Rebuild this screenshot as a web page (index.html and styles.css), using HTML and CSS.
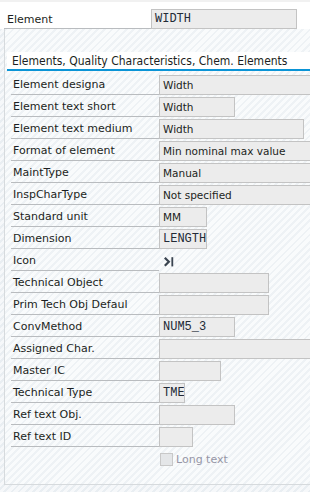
FILE: index.html
```html
<!doctype html>
<html lang="en">
<head>
    <meta charset="UTF-8">
    <title>Element</title>
    <link rel="stylesheet" href="styles.css">
</head>
<body>
<div class="top">
    <div class="row head">
        <span class="lbl">Element</span>
        <span class="fld mono w146">WIDTH</span>
    </div>
</div>
<div class="frame">
    <div class="tab">Elements, Quality Characteristics, Chem. Elements</div>
    <div class="rows">
        <div class="row"><span class="lbl">Element designa</span><span class="fld wide">Width</span></div>
        <div class="row"><span class="lbl">Element text short</span><span class="fld w76">Width</span></div>
        <div class="row"><span class="lbl">Element text medium</span><span class="fld w145">Width</span></div>
        <div class="row"><span class="lbl">Format of element</span><span class="fld wide">Min nominal max value</span></div>
        <div class="row"><span class="lbl">MaintType</span><span class="fld wide">Manual</span></div>
        <div class="row"><span class="lbl">InspCharType</span><span class="fld wide">Not specified</span></div>
        <div class="row"><span class="lbl">Standard unit</span><span class="fld w48">MM</span></div>
        <div class="row"><span class="lbl">Dimension</span><span class="fld mono w48">LENGTH</span></div>
        <div class="row">
            <span class="lbl">Icon</span>
            <span class="icon">
                <svg width="12" height="12" viewBox="0 0 12 12">
                    <path d="M2.8 1.8 L6.8 5.8 L2.8 9.8" fill="none" stroke="#3a4450" stroke-width="2.2"/>
                    <rect x="9.4" y="1.2" width="1.8" height="9.2" fill="#3a4450"/>
                </svg>
            </span>
        </div>
        <div class="row"><span class="lbl">Technical Object</span><span class="fld w110"></span></div>
        <div class="row"><span class="lbl">Prim Tech Obj Defaul</span><span class="fld w110"></span></div>
        <div class="row"><span class="lbl">ConvMethod</span><span class="fld mono w76">NUM5_3</span></div>
        <div class="row"><span class="lbl">Assigned Char.</span><span class="fld wide"></span></div>
        <div class="row"><span class="lbl">Master IC</span><span class="fld w62"></span></div>
        <div class="row"><span class="lbl">Technical Type</span><span class="fld mono w26">TME</span></div>
        <div class="row"><span class="lbl">Ref text Obj.</span><span class="fld w76"></span></div>
        <div class="row"><span class="lbl">Ref text ID</span><span class="fld w34"></span></div>
        <div class="check">
            <span class="box"></span>
            <span class="txt">Long text</span>
        </div>
    </div>
</div>
</body>
</html>
```

FILE: styles.css
```css
*{
    margin:0;
    padding:0;
    box-sizing:border-box;
}
body{
    width:310px;
    height:492px;
    overflow:hidden;
    font-family:"DejaVu Sans",sans-serif;
    font-size:11px;
    color:#1c1f22;
    background:repeating-linear-gradient(135deg,#e9eef2 0 2px,#f6f8fa 2px 5px);
}
.top{
    height:29px;
    background:#fff;
    border-top:2px solid #f1f1f1;
    padding-top:7px;
}
.row{
    display:flex;
    align-items:flex-end;
    height:22px;
    white-space:nowrap;
}
.row.head{
    height:20px;
    margin-left:4px;
}
.row.head .lbl{
    width:147px;
    padding-left:3px;
    padding-top:1px;
}
.lbl{
    width:148px;
    height:100%;
    padding:2px 0 0 2px;
    border-bottom:1px solid #b9bcbf;
    line-height:19px;
}
.fld{
    height:20px;
    padding-left:3px;
    line-height:18px;
    font-size:10.5px;
    background:#ececec;
    border:1px solid #c3c3c3;
    overflow:hidden;
}
.mono{
    font-family:"Liberation Mono",monospace;
    font-size:12px;
    color:#222a36;
}
.wide{ flex:1; margin-right:-4px; }
.w146{ width:146px; }
.w145{ width:145px; }
.w110{ width:110px; }
.w76{ width:76px; }
.w62{ width:62px; }
.w48{ width:48px; }
.w34{ width:34px; }
.w26{ width:26px; }
.icon{
    height:20px;
    padding:5px 0 0 3px;
}
.frame{
    height:456px;
    margin-left:4px;
    border-left:1px solid #d6dadd;
    border-bottom:1px solid #d6dadd;
    padding-top:23px;
    background:repeating-linear-gradient(135deg,#eef2f5 0 2px,#f9fbfc 2px 5px);
}
.tab{
    margin-left:2px;
    height:19px;
    padding:1px 0 0 5px;
    line-height:17px;
    font-family:"DejaVu Sans Condensed","DejaVu Sans",sans-serif;
    font-size:12px;
    background:#fff;
    border-bottom:2px solid #0a94d6;
    white-space:nowrap;
}
.rows{
    margin-top:2px;
    padding-left:6px;
}
.check{
    display:flex;
    align-items:center;
    gap:3px;
    height:22px;
    padding-left:149px;
    padding-top:2px;
}
.check .box{
    width:13px;
    height:13px;
    border:1px solid #c8c8c8;
    background:#e4e6e8;
}
.check .txt{
    color:#9696a6;
}
```
